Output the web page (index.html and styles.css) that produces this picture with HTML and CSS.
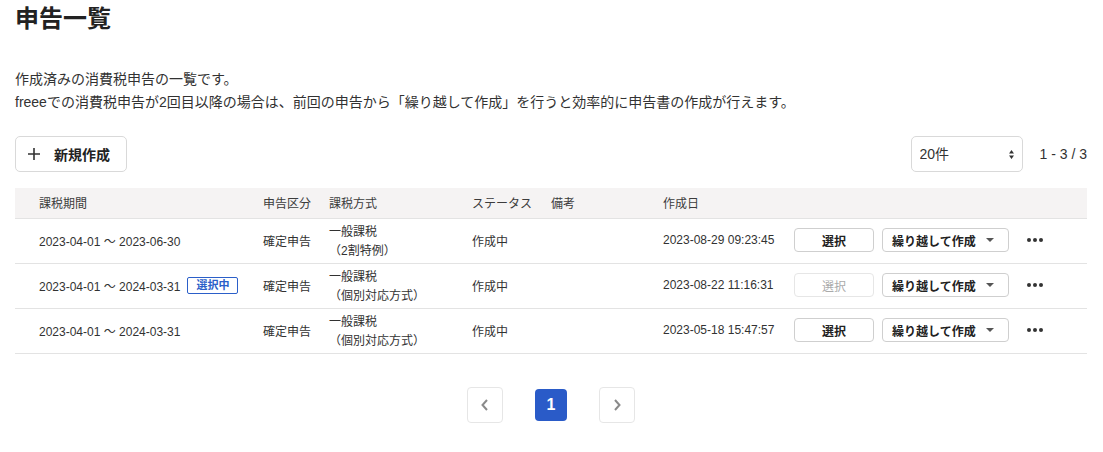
FILE: index.html
```html
<!DOCTYPE html>
<html lang="ja">
<head>
<meta charset="utf-8">
<title>申告一覧</title>
<link rel="stylesheet" href="styles.css">
</head>
<body>
<main class="page">
  <h1 class="title">申告一覧</h1>
  <div class="intro">
    <p>作成済みの消費税申告の一覧です。</p>
    <p>freeeでの消費税申告が2回目以降の場合は、前回の申告から「繰り越して作成」を行うと効率的に申告書の作成が行えます。</p>
  </div>

  <div class="toolbar">
    <button class="btn-new" type="button">
      <svg class="plus" width="12" height="12" viewBox="0 0 12 12"><path d="M6 0v12M0 6h12" stroke="#333" stroke-width="1.6" fill="none"/></svg>
      <span>新規作成</span>
    </button>
    <div class="toolbar-right">
      <div class="select-wrap">
        <select class="per-page"><option>20件</option></select>
        <svg class="select-arrows" width="5" height="9" viewBox="0 0 5 9"><path d="M2.5 0L5 3.5H0z M2.5 9L0 5.5H5z" fill="#333"/></svg>
      </div>
      <span class="count">1 - 3 / 3</span>
    </div>
  </div>

  <div class="table">
    <div class="row head">
      <div class="cell first">課税期間</div>
      <div class="cell">申告区分</div>
      <div class="cell">課税方式</div>
      <div class="cell">ステータス</div>
      <div class="cell">備考</div>
      <div class="cell">作成日</div>
      <div class="cell"></div>
      <div class="cell"></div>
      <div class="cell"></div>
    </div>

    <div class="row">
      <div class="cell first">2023-04-01 ～ 2023-06-30</div>
      <div class="cell">確定申告</div>
      <div class="cell two">一般課税<br>（2割特例）</div>
      <div class="cell">作成中</div>
      <div class="cell"></div>
      <div class="cell">2023-08-29 09:23:45</div>
      <div class="cell"><button class="btn-select" type="button">選択</button></div>
      <div class="cell"><button class="btn-carry" type="button"><span>繰り越して作成</span><svg class="caret" width="8" height="4" viewBox="0 0 8 4"><path d="M0 0h8L4 4z" fill="#555"/></svg></button></div>
      <div class="cell"><svg class="dots" width="16" height="4" viewBox="0 0 16 4"><circle cx="2" cy="2" r="2"/><circle cx="8" cy="2" r="2"/><circle cx="14" cy="2" r="2"/></svg></div>
    </div>

    <div class="row">
      <div class="cell first">2023-04-01 ～ 2024-03-31<span class="badge">選択中</span></div>
      <div class="cell">確定申告</div>
      <div class="cell two">一般課税<br>（個別対応方式）</div>
      <div class="cell">作成中</div>
      <div class="cell"></div>
      <div class="cell">2023-08-22 11:16:31</div>
      <div class="cell"><button class="btn-select disabled" type="button" disabled>選択</button></div>
      <div class="cell"><button class="btn-carry" type="button"><span>繰り越して作成</span><svg class="caret" width="8" height="4" viewBox="0 0 8 4"><path d="M0 0h8L4 4z" fill="#555"/></svg></button></div>
      <div class="cell"><svg class="dots" width="16" height="4" viewBox="0 0 16 4"><circle cx="2" cy="2" r="2"/><circle cx="8" cy="2" r="2"/><circle cx="14" cy="2" r="2"/></svg></div>
    </div>

    <div class="row">
      <div class="cell first">2023-04-01 ～ 2024-03-31</div>
      <div class="cell">確定申告</div>
      <div class="cell two">一般課税<br>（個別対応方式）</div>
      <div class="cell">作成中</div>
      <div class="cell"></div>
      <div class="cell">2023-05-18 15:47:57</div>
      <div class="cell"><button class="btn-select" type="button">選択</button></div>
      <div class="cell"><button class="btn-carry" type="button"><span>繰り越して作成</span><svg class="caret" width="8" height="4" viewBox="0 0 8 4"><path d="M0 0h8L4 4z" fill="#555"/></svg></button></div>
      <div class="cell"><svg class="dots" width="16" height="4" viewBox="0 0 16 4"><circle cx="2" cy="2" r="2"/><circle cx="8" cy="2" r="2"/><circle cx="14" cy="2" r="2"/></svg></div>
    </div>
  </div>

  <nav class="pager">
    <button class="pg-arrow" type="button" aria-label="前へ"><svg width="8" height="12" viewBox="0 0 8 12"><path d="M6 1L1.5 6L6 11" stroke="#8a8a8a" stroke-width="2" fill="none"/></svg></button>
    <button class="pg-current" type="button">1</button>
    <button class="pg-arrow" type="button" aria-label="次へ"><svg width="8" height="12" viewBox="0 0 8 12"><path d="M2 1L6.5 6L2 11" stroke="#8a8a8a" stroke-width="2" fill="none"/></svg></button>
  </nav>
</main>
</body>
</html>
```

FILE: styles.css
```css
* { box-sizing: border-box; }

html, body {
  margin: 0;
  padding: 0;
  background: #fff;
}

body {
  font-family: "Liberation Sans", "Noto Sans CJK JP", sans-serif;
  color: #323232;
}

.page {
  padding: 0 16px 0 15px;
}

.title {
  margin: 0;
  padding-top: 1px;
  font-size: 24px;
  line-height: 36px;
  font-weight: bold;
  color: #222;
}

.intro {
  margin-top: 31px;
  font-size: 14px;
  line-height: 23px;
}

.intro p {
  margin: 0;
}

.toolbar {
  margin-top: 22px;
  display: flex;
  justify-content: space-between;
  align-items: center;
  height: 36px;
}

.btn-new {
  display: flex;
  align-items: center;
  gap: 14px;
  height: 36px;
  width: 112px;
  padding: 0 0 0 12px;
  border: 1px solid #d9d9d9;
  border-radius: 5px;
  background: #fff;
  font-family: inherit;
  font-size: 14px;
  font-weight: bold;
  color: #222;
}

.plus { display: block; }

.toolbar-right {
  display: flex;
  align-items: center;
  gap: 17px;
}

.select-wrap {
  position: relative;
  width: 112px;
  height: 36px;
}

.per-page {
  appearance: none;
  -webkit-appearance: none;
  width: 100%;
  height: 100%;
  border: 1px solid #d9d9d9;
  border-radius: 5px;
  background: #fff;
  padding: 0 0 0 8px;
  font-family: inherit;
  font-size: 14px;
  color: #323232;
}

.select-arrows {
  position: absolute;
  right: 9px;
  top: 14px;
}

.count {
  font-size: 14px;
  color: #323232;
}

.table {
  margin-top: 16px;
  font-size: 12px;
}

.row {
  display: grid;
  grid-template-columns: 240px 66px 143px 79px 112px 131px 88px 145px 1fr;
  align-items: center;
  height: 45px;
  padding-bottom: 2px;
  border-bottom: 1px solid #e3e3e3;
}

.row.head {
  height: 31px;
  padding-bottom: 1px;
  background: #f5f3f3;
  color: #3c3c3c;
}

.cell {
  padding: 0 8px;
  white-space: nowrap;
  display: flex;
  align-items: center;
}

.cell.first {
  padding-left: 24px;
}

.cell.two {
  display: block;
  line-height: 19px;
  padding-top: 3px;
}

.badge {
  display: inline-block;
  margin-left: 7px;
  height: 17px;
  line-height: 15px;
  padding: 0 8px;
  border: 1px solid #2b5fc9;
  border-radius: 2px;
  color: #2b5fc9;
  font-size: 11px;
  font-weight: bold;
}

.btn-select {
  flex: none;
  width: 80px;
  height: 24px;
  border: 1px solid #cfcfcf;
  border-radius: 4px;
  background: #fff;
  font-family: inherit;
  font-size: 12px;
  font-weight: bold;
  color: #222;
  padding: 0;
}

.btn-select.disabled {
  border-color: #e6e6e6;
  color: #aaa;
  font-weight: normal;
}

.btn-carry {
  flex: none;
  display: flex;
  align-items: center;
  justify-content: space-between;
  width: 127px;
  height: 24px;
  padding: 0 14px 0 9px;
  border: 1px solid #cfcfcf;
  border-radius: 4px;
  background: #fff;
  font-family: inherit;
  font-size: 12px;
  font-weight: bold;
  color: #222;
}

.caret { display: block; }

.dots {
  display: block;
  fill: #333;
}

.pager {
  margin-top: 33px;
  display: flex;
  justify-content: center;
  align-items: center;
  gap: 32px;
}

.pg-arrow {
  width: 36px;
  height: 36px;
  display: flex;
  align-items: center;
  justify-content: center;
  border: 1px solid #e6e6e6;
  border-radius: 4px;
  background: #fff;
  padding: 0;
}

.pg-current {
  width: 32px;
  height: 32px;
  border: none;
  border-radius: 4px;
  background: #2a5bc8;
  color: #fff;
  font-family: inherit;
  font-size: 16px;
  font-weight: bold;
  padding: 0;
}
```
